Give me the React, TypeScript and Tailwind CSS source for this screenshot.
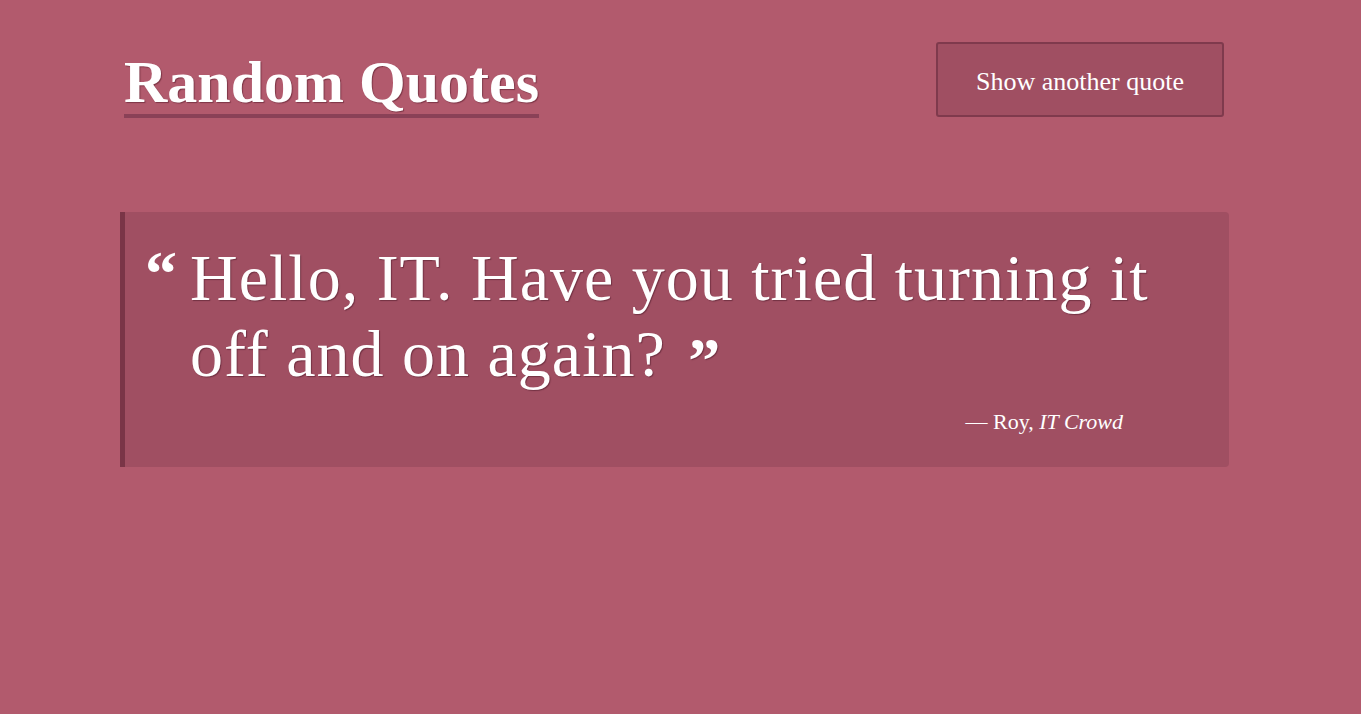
import React from "react";

export default function App() {
  return (
    <div
      className="min-h-[714px] w-full bg-[#b25a6d] text-white"
      style={{ fontFamily: '"Liberation Serif", "DejaVu Serif", serif' }}
    >
      <div className="ml-[120px] w-[1109px] pt-[42px]">
        <header className="flex items-start justify-between pl-[4px] pr-[5px]">
          <h1 className="mt-[8px] border-b-[4px] border-[#8a4157] text-[60px] font-bold leading-[64px] [text-shadow:1px_1px_1px_rgba(90,30,45,0.6)]">
            Random Quotes
          </h1>
          <button className="h-[75px] w-[288px] rounded-[3px] border-2 border-[#7f3a4d] bg-[#a04f62] pt-[3px] text-[26px] text-white">
            Show another quote
          </button>
        </header>
        <div className="mt-[94px] flex min-h-[255px] flex-col rounded-r-[4px] border-l-[5px] border-[#7a3547] bg-[#a04f62] pb-[22px] pl-[20px] pr-[40px] pt-[28px]">
          <div className="flex items-start">
            <span className="mt-[-4px] w-[45px] text-[64px] font-bold leading-[76px]">“</span>
            <p className="w-[995px] text-[66px] leading-[76px] tracking-[1px] [text-shadow:1px_1px_1px_rgba(70,20,35,0.5)]">
              Hello, IT. Have you tried turning it off and on again?{" "}
              <span className="relative left-[5px] top-[6px] text-[64px] font-bold">”</span>
            </p>
          </div>
          <div className="mt-[12px] pr-[66px] text-right text-[22px]">
            — Roy, <i>IT Crowd</i>
          </div>
        </div>
      </div>
    </div>
  );
}
